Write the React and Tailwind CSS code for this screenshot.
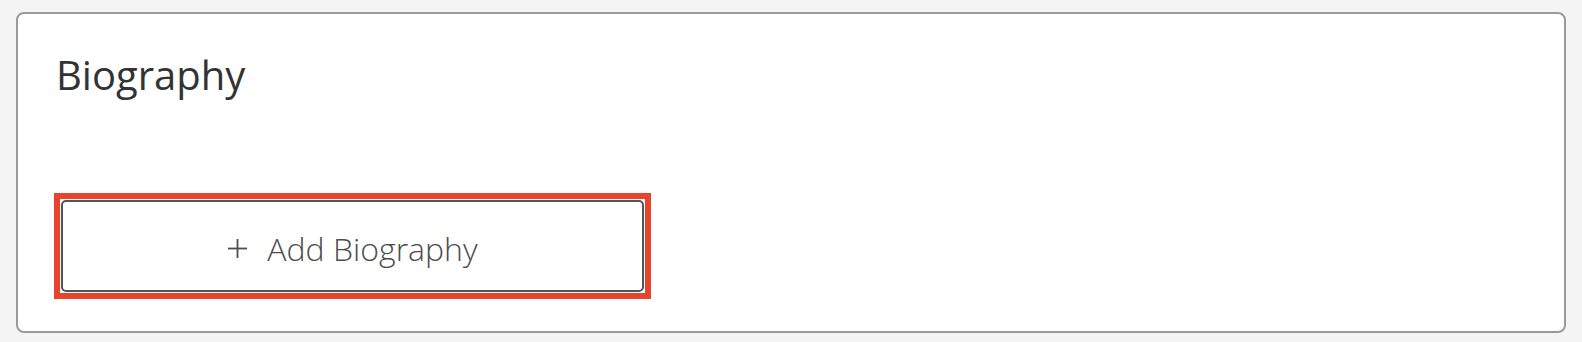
export default function App() {
  return (
    <div className="min-h-[342px] w-full bg-[#f4f4f4] px-4 pt-3 pb-[9px]" style={{ fontFamily: '"Open Sans", "Noto Sans", sans-serif' }}>
      <div className="h-[321px] rounded-[8px] border-2 border-[#9a9a9a] bg-white px-9 pt-[41px]">
        <h2 className="pl-[2px] text-[40px] leading-none font-normal text-[#333333]">Biography</h2>
        <div className="mt-[98px] w-[597px] border-[6px] border-[#e8432d] p-px">
          <button className="flex h-[92px] w-full items-center justify-center gap-[19px] rounded-[5px] border-2 border-[#555555] bg-white pt-[6px] text-[32px] font-light leading-none text-[#4d4d4d]">
            <svg width="21" height="21" viewBox="0 0 21 21" className="shrink-0 -mt-[2px]">
              <line x1="10.5" y1="1" x2="10.5" y2="20" stroke="#4d4d4d" strokeWidth="1.8" />
              <line x1="1" y1="10.5" x2="20" y2="10.5" stroke="#4d4d4d" strokeWidth="1.8" />
            </svg>
            <span>Add Biography</span>
          </button>
        </div>
      </div>
    </div>
  );
}
